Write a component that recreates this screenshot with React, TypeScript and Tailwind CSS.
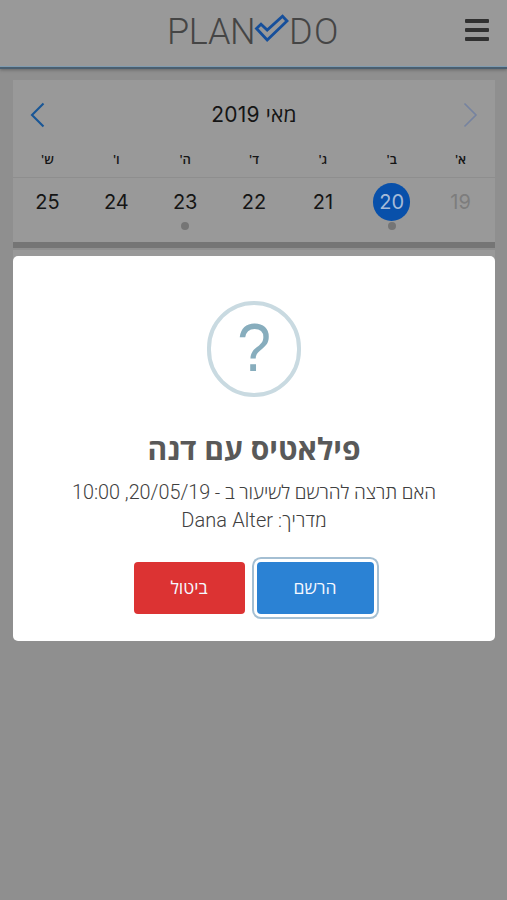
const days = [
  { name: "א'", date: 19, muted: true },
  { name: "ב'", date: 20, selected: true, dot: true },
  { name: "ג'", date: 21 },
  { name: "ד'", date: 22 },
  { name: "ה'", date: 23, dot: true },
  { name: "ו'", date: 24 },
  { name: "ש'", date: 25 },
];

function Header() {
  return (
    <header className="relative z-10 h-[69px] border-b-2 border-[#4a5f70] bg-[#999999] shadow-[0_1px_3px_#666]">
      <div className="flex h-[67px] border-b border-[#7f9bb0]" dir="ltr">
        <div className="flex w-full items-start pl-[167px] pt-[9px] font-['Roboto'] text-[36px] font-light leading-[47px] text-[#454545]">
          <span className="w-[87px] tracking-[-0.3px]">PLAN</span>
          <svg className="mt-[5px] h-[29px] w-[35px] shrink-0" viewBox="0 0 35 29" fill="none" stroke="#164f9b" strokeWidth="2.8">
            <path d="M2.5 14.5 7 10.2 13.2 16 28.5 2.3 33 7 13.2 26Z" />
          </svg>
          <span className="tracking-[1.4px]">DO</span>
        </div>
        <button className="mr-[18px] mt-[19px] flex h-[22px] w-[24px] shrink-0 flex-col justify-between" aria-label="תפריט">
          <span className="h-1 w-full rounded-[1px] bg-[#303030]" />
          <span className="h-1 w-full rounded-[1px] bg-[#303030]" />
          <span className="h-1 w-full rounded-[1px] bg-[#303030]" />
        </button>
      </div>
    </header>
  );
}

function Calendar() {
  return (
    <section className="ml-[13px] mr-[12px] mt-[11px] h-[168px] border-b-[6px] border-[#757575] bg-[#999999] text-[#151515]">
      <div className="flex h-[70px] items-center justify-between pl-[17px] pr-[17px]">
        <svg className="h-[26px] w-[15px]" viewBox="0 0 15 26" fill="none" stroke="#7683a0" strokeWidth="1.6">
          <path d="M1.5 1.5 13 13 1.5 24.5" />
        </svg>
        <h1 className="font-['Inter','Open_Sans',sans-serif] text-[21px] tracking-[0.2px]">מאי 2019</h1>
        <svg className="h-[26px] w-[15px]" viewBox="0 0 15 26" fill="none" stroke="#195696" strokeWidth="2.1">
          <path d="M13.5 1.5 2 13 13.5 24.5" />
        </svg>
      </div>
      <div className="grid h-[28px] grid-cols-7 border-b border-[#8e8e8e] text-center font-['Open_Sans',sans-serif] text-[13px] font-semibold leading-[19px]">
        {days.map((d) => (
          <span key={d.date}>{d.name}</span>
        ))}
      </div>
      <div className="grid grid-cols-7 pt-[5px] font-['Inter',sans-serif] text-[20px]">
        {days.map((d) => (
          <div key={d.date} className="flex flex-col items-center">
            <span
              className={
                d.selected
                  ? "flex h-[38px] w-[37px] items-center justify-center rounded-full bg-[#0850aa] text-[#a5bbd8]"
                  : d.muted
                    ? "flex h-[38px] w-[37px] items-center justify-center text-[#7d7d7d]"
                    : "flex h-[38px] w-[37px] items-center justify-center"
              }
            >
              {d.date}
            </span>
            {d.dot && <span className="mt-[1px] size-[8px] rounded-full bg-[#757575]" />}
          </div>
        ))}
      </div>
    </section>
  );
}

function Dialog() {
  return (
    <div
      role="dialog"
      className="absolute left-[13px] top-[256px] z-20 flex h-[385px] w-[482px] flex-col items-center rounded-[5px] bg-white pt-[45px]"
    >
      <div className="flex h-[96px] w-[94px] items-center justify-center rounded-full border-4 border-[#c9dae1] font-['Liberation_Sans',sans-serif] text-[69px] leading-none text-[#87adbd]">
        <span className="-mt-[3px] scale-x-[0.88]">?</span>
      </div>
      <h2 className="mt-[31px] whitespace-nowrap font-['Open_Sans',sans-serif] text-[30px] font-bold leading-[42px] text-[#595959]">
        פילאטיס עם דנה
      </h2>
      <div className="mt-[9px] whitespace-nowrap text-center font-['Roboto','Open_Sans',sans-serif] text-[19px] font-light text-[#404040]">
        <p className="h-[27px] leading-[28px]">
          האם תרצה להרשם לשיעור ב - <span className="text-[19.8px]">20/05/19, 10:00</span>
        </p>
        <p className="h-[28px] leading-[28px]">
          <span className="tracking-[0.2px]">מדריך: </span>
          <span className="text-[20px] tracking-[0.1px]">Dana Alter</span>
        </p>
      </div>
      <div className="mr-[1px] mt-[28px] flex gap-[12px] font-['Open_Sans',sans-serif] text-[17.5px] text-[#f5f8ff]">
        <button className="h-[52px] w-[117px] rounded-[4px] bg-[#2b82d4] pb-[2px] shadow-[0_0_0_3px_#fff,0_0_0_5px_#a4bfd3]">
          הרשם
        </button>
        <button className="h-[52px] w-[111px] rounded-[4px] bg-[#dc3333] pb-[2px]">ביטול</button>
      </div>
    </div>
  );
}

export default function App() {
  return (
    <main dir="rtl" className="relative h-[900px] w-full overflow-hidden bg-[#8f8f8f]">
      <Header />
      <Calendar />
      <div className="ml-[13px] mr-[12px] mt-[2px] h-[20px] bg-[#999999]" />
      <Dialog />
    </main>
  );
}
